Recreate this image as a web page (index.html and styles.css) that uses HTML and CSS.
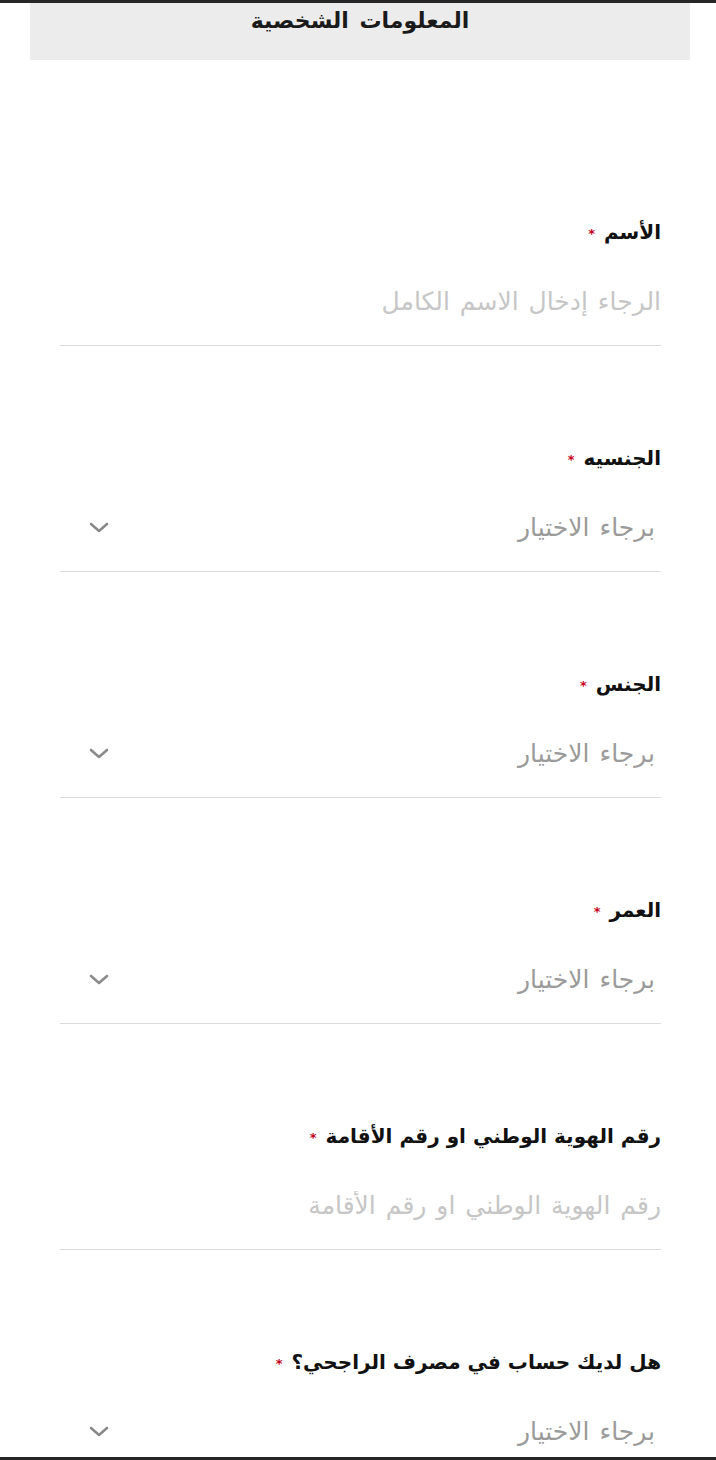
FILE: index.html
```html
<!DOCTYPE html>
<html lang="ar" dir="rtl">
<head>
  <meta charset="UTF-8">
  <meta name="viewport" content="width=device-width, initial-scale=1.0">
  <title>المعلومات الشخصية</title>
  <link rel="stylesheet" href="styles.css">
</head>
<body>
  <div class="header">
    <h1>المعلومات الشخصية</h1>
  </div>

  <form class="form">
    <div class="field">
      <label for="fullName">الأسم <span class="req">*</span></label>
      <input class="control" type="text" id="fullName" placeholder="الرجاء إدخال الاسم الكامل">
    </div>

    <div class="field">
      <label>الجنسيه <span class="req">*</span></label>
      <div class="control select">
        <span>برجاء الاختيار</span>
        <svg class="chevron" width="22" height="14" viewBox="0 0 22 14"><path d="M3 3l8 7 8-7" fill="none" stroke="#8a8a8a" stroke-width="2.6" stroke-linecap="round" stroke-linejoin="round"/></svg>
      </div>
    </div>

    <div class="field">
      <label>الجنس <span class="req">*</span></label>
      <div class="control select">
        <span>برجاء الاختيار</span>
        <svg class="chevron" width="22" height="14" viewBox="0 0 22 14"><path d="M3 3l8 7 8-7" fill="none" stroke="#8a8a8a" stroke-width="2.6" stroke-linecap="round" stroke-linejoin="round"/></svg>
      </div>
    </div>

    <div class="field">
      <label>العمر <span class="req">*</span></label>
      <div class="control select">
        <span>برجاء الاختيار</span>
        <svg class="chevron" width="22" height="14" viewBox="0 0 22 14"><path d="M3 3l8 7 8-7" fill="none" stroke="#8a8a8a" stroke-width="2.6" stroke-linecap="round" stroke-linejoin="round"/></svg>
      </div>
    </div>

    <div class="field">
      <label for="idNumber">رقم الهوية الوطني او رقم الأقامة <span class="req">*</span></label>
      <input class="control" type="text" id="idNumber" placeholder="رقم الهوية الوطني او رقم الأقامة">
    </div>

    <div class="field">
      <label>هل لديك حساب في مصرف الراجحي؟ <span class="req">*</span></label>
      <div class="control select">
        <span>برجاء الاختيار</span>
        <svg class="chevron" width="22" height="14" viewBox="0 0 22 14"><path d="M3 3l8 7 8-7" fill="none" stroke="#8a8a8a" stroke-width="2.6" stroke-linecap="round" stroke-linejoin="round"/></svg>
      </div>
    </div>
  </form>

  <div class="bottom-bar"></div>
</body>
</html>
```

FILE: styles.css
```css
body {
  margin: 0;
  font-family: "DejaVu Sans", sans-serif;
  background-color: #fff;
  border-top: 3px solid #262626;
}

.header {
  margin: 0 26px 0 30px;
  height: 57px;
  background-color: #ececec;
  text-align: center;
}

.header h1 {
  margin: 0;
  padding-top: 3px;
  font-size: 22px;
  line-height: 30px;
  word-spacing: 3px;
  font-weight: bold;
  color: #1a1a1a;
}

.form {
  padding: 60px 55px 40px 60px;
}

.field {
  margin-top: 97px;
}

.field label {
  display: block;
  height: 30px;
  line-height: 30px;
  font-size: 20px;
  font-weight: bold;
  color: #111;
}

.req {
  color: #c4001a;
  font-size: 13px;
  vertical-align: middle;
  margin-right: 2px;
}

.control {
  display: block;
  box-sizing: content-box;
  width: 100%;
  height: 60px;
  line-height: 60px;
  margin-top: 25px;
  padding: 0 0 13px 0;
  border: none;
  border-bottom: 1px solid #dcdcdc;
  font-family: inherit;
  font-size: 25px;
  word-spacing: 2px;
  color: #333;
  background: transparent;
  outline: none;
}

.control::placeholder {
  color: #c6c6c6;
}

.select {
  display: flex;
  align-items: center;
  justify-content: space-between;
  padding-right: 6px;
  width: auto;
  color: #9a9a9a;
}

.chevron {
  margin-left: 28px;
}

.bottom-bar {
  position: fixed;
  left: 0;
  right: 0;
  bottom: 0;
  height: 3px;
  background-color: #262626;
}
```
